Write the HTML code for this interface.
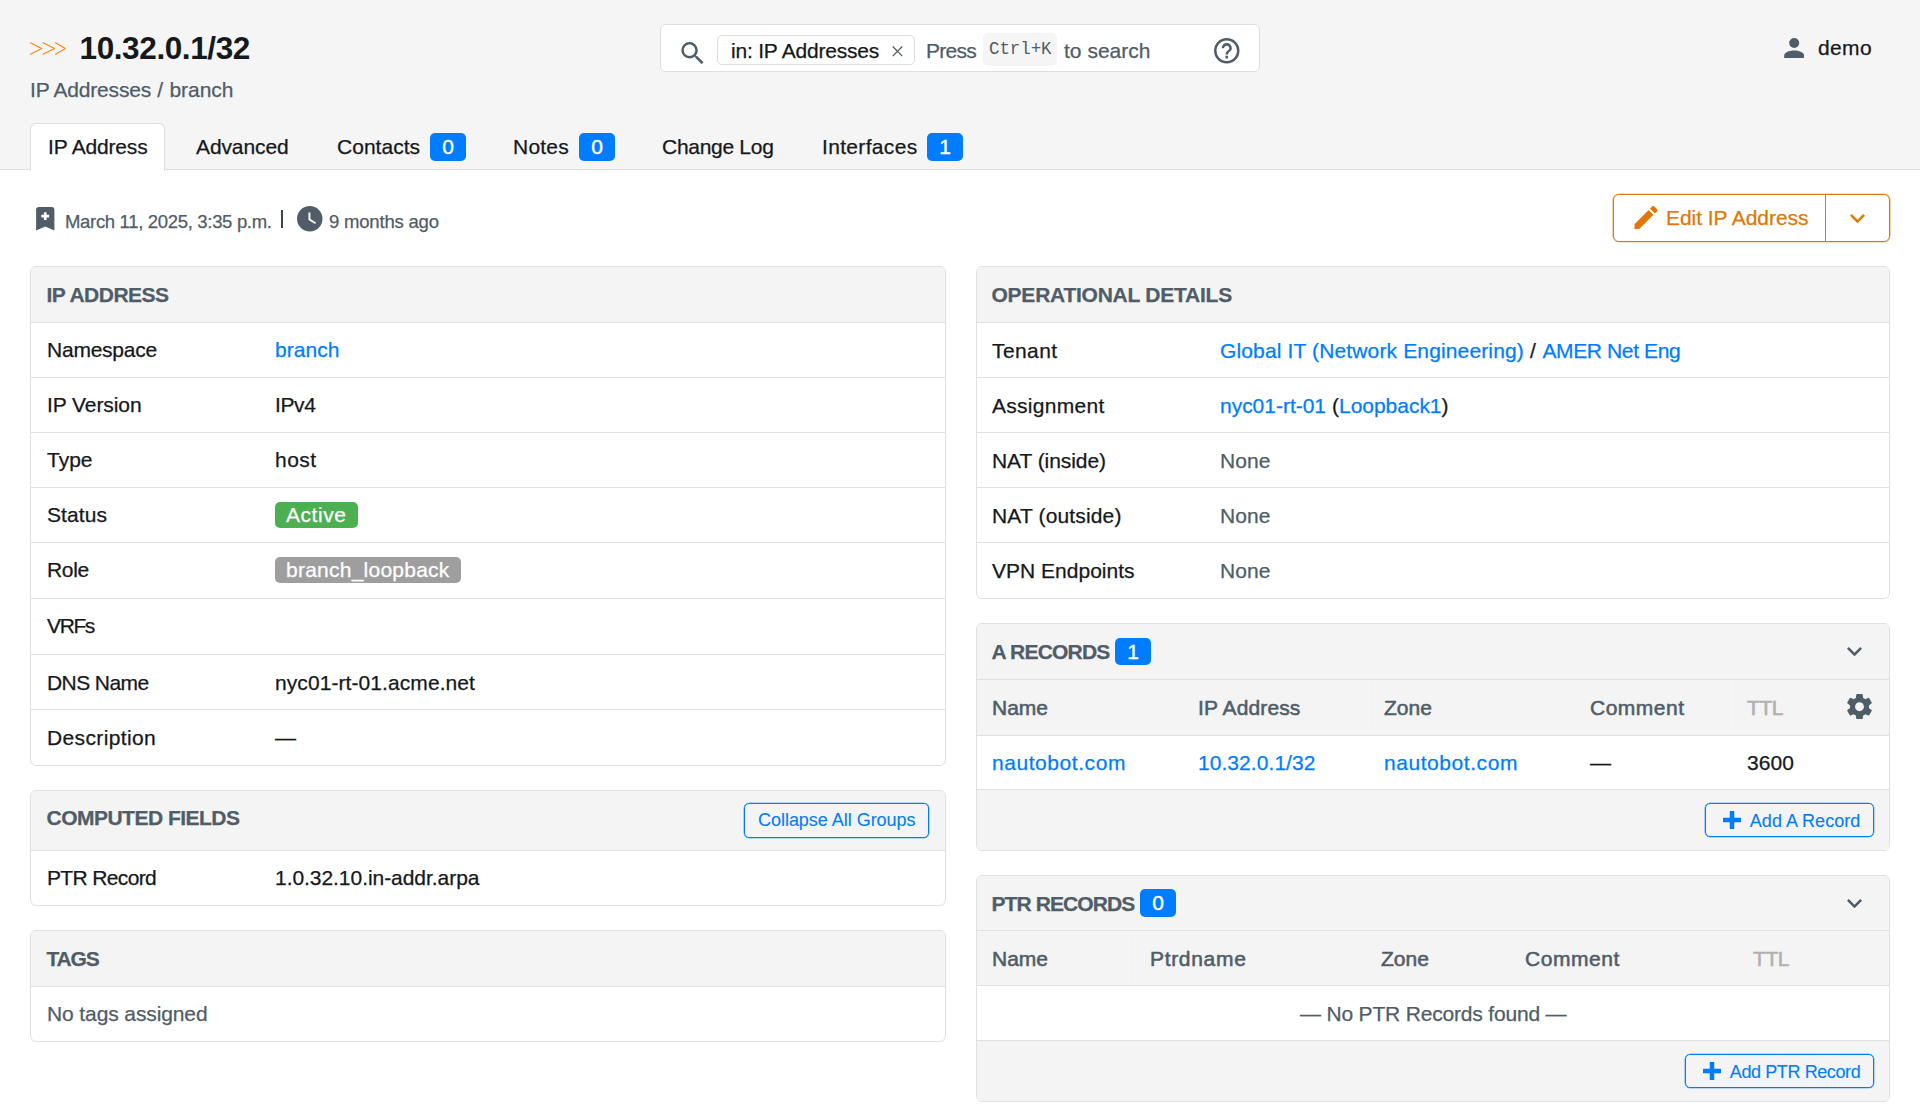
<!DOCTYPE html>
<html lang="en">
<head>
<meta charset="utf-8">
<title>10.32.0.1/32 - Nautobot</title>
<style>
*{box-sizing:border-box}
html,body{margin:0;padding:0}
body{width:1920px;height:1110px;overflow:hidden;background:#fff;position:relative;
 font-family:"Liberation Sans",sans-serif;font-size:21px;color:#15191c;line-height:1;-webkit-text-stroke:.25px}
a{color:#007dff;text-decoration:none}
.abs{position:absolute}
span{white-space:pre}
svg{display:block;position:absolute}
.gray{color:#505d68}
header{position:absolute;left:0;top:0;width:1920px;height:170px;background:#f5f5f5;border-bottom:1px solid #dedede}
h1{position:absolute;left:79.5px;top:32px;margin:0;font-size:31.5px;line-height:32px;-webkit-text-stroke:0;font-weight:700;color:#15191c}
.crumb{position:absolute;left:30px;top:78px;font-size:21px;line-height:24px;color:#505d68}
.crumb a{color:#505d68}
/* tabs */
.tabs{position:absolute;left:30px;top:123px;height:48px;margin:0;padding:0;list-style:none}
.tabs li{position:absolute;top:0;height:47px;line-height:48px;font-size:21px;color:#15191c}
.tabs li.active{background:#fff;border:1px solid #dedede;border-bottom:none;border-radius:6px 6px 0 0;height:48px;line-height:46px}
.badge{display:inline-block;background:#007dff;color:#fff;border-radius:5px;text-align:center;font-size:21px;-webkit-text-stroke:.4px}
.tabs .badge{position:absolute;top:10px;height:28px;line-height:28px;width:36px;margin-left:1px}
/* search */
.search{position:absolute;left:660px;top:24px;width:600px;height:48px;background:#fff;border:1px solid #dedede;border-radius:6px}
.chip{position:absolute;left:56px;top:10px;width:198px;height:30px;border:1px solid #dedede;border-radius:5px;background:#fff}
kbd{position:absolute;left:322px;top:8px;width:74px;height:33px;background:#f5f5f5;border-radius:5px;font-family:"Liberation Mono",monospace;font-size:17.5px;line-height:33px;color:#505d68;padding-left:6px;-webkit-text-stroke:0}
/* buttons */
.btn-edit{position:absolute;left:1613px;top:194px;width:277px;height:48px;border:1px solid #e07807;box-shadow:0 0 0 .35px #e07807;border-radius:6px;color:#e07807;font-size:21px}
.btn-edit i{position:absolute;left:211px;top:0;width:1.3px;height:46px;background:#e07807}
.btn{position:absolute;border:1px solid #007dff;box-shadow:0 0 0 .3px #007dff;border-radius:5px;color:#007dff;background:transparent;font-size:18px;-webkit-text-stroke:.1px}
/* panels */
.panel{position:absolute;border:1px solid #e0e0e0;border-radius:6px;background:#fff;overflow:hidden}
.ph{position:relative;height:55px;background:#f4f4f4;font-weight:700;color:#505d68;font-size:21px;line-height:56px;padding-left:15.5px}
.ph .badge{position:absolute;top:14px;height:27px;line-height:27px;width:36px;font-weight:400}
.row{position:relative;height:55px;border-top:1px solid #e0e0e0;line-height:54px}
.row .k{position:absolute;left:16px;top:0}
.row .v{position:absolute;left:244px;top:0}
.lbl{display:inline-block;height:26px;line-height:26px;border-radius:5px;color:#fff;padding:0 11px;vertical-align:middle;position:relative;top:-1px}
.th{position:relative;height:55px;border-top:1px solid #e0e0e0;background:#f4f4f4;line-height:55px;font-weight:400;color:#505d68;-webkit-text-stroke-width:.55px}
.th>span,.tr>span,.tr>a{position:absolute;top:0}
.tr{position:relative;height:55px;border-top:1px solid #e0e0e0;line-height:55px;background:#fff}
.rp>div{margin-left:-1px}
.rp .row{line-height:55px}
.th i{position:absolute;top:0;width:1px;height:100%;background:rgba(255,255,255,.22)}
.pf{position:relative;height:62px;border-top:1px solid #e0e0e0;background:#f4f4f4}
</style>
</head>
<body>
<header>
  <svg style="left:29px;top:41px" width="38" height="15" viewBox="0 0 38 15" fill="none" stroke="#ff8504" stroke-width="1.05" stroke-linecap="round" stroke-linejoin="round"><path d="M1.4 1.7 12.7 7.45 1.4 13.2M14.1 1.7 25.5 7.45 14.1 13.2M26.5 1.7 36.4 7.45 26.5 13.2"/></svg>
  <h1><span style="letter-spacing:-0.39px">10.32.0.1/32</span></h1>
  <div class="crumb"><a><span style="letter-spacing:-0.20px">IP Addresses</span></a><span style="letter-spacing:0.33px"> / </span><a><span style="letter-spacing:-0.04px">branch</span></a></div>

  <div class="search">
    <svg style="left:20px;top:17.2px" width="22.8" height="22.2" viewBox="3 3 17.5 17.5" fill="#505d68"><path d="M9.5,3A6.5,6.5 0 0,1 16,9.5C16,11.11 15.41,12.59 14.44,13.73L14.71,14H15.5L20.5,19L19,20.5L14,15.5V14.71L13.73,14.44C12.59,15.41 11.11,16 9.5,16A6.5,6.5 0 0,1 3,9.5A6.5,6.5 0 0,1 9.5,3M9.5,5C7,5 5,7 5,9.5C5,12 7,14 9.5,14C12,14 14,12 14,9.5C14,7 12,5 9.5,5Z"/></svg>
    <div class="chip">
      <span class="abs" style="left:13px;top:0;line-height:30px;font-size:21px"><span style="letter-spacing:-0.21px">in: IP Addresses</span></span>
      <svg style="left:173.6px;top:10px" width="11" height="10.7" viewBox="0 0 11 11" fill="none" stroke="#505d68" stroke-width="1.35"><path d="M.6 .6 10.4 10.4M10.4 .6 .6 10.4"/></svg>
    </div>
    <span class="abs gray" style="left:265px;top:0;line-height:52px"><span style="letter-spacing:-0.74px">Press</span></span>
    <kbd><span style="letter-spacing:-0.09px">Ctrl+K</span></kbd>
    <span class="abs gray" style="left:403px;top:0;line-height:52px"><span style="letter-spacing:0.01px">to search</span></span>
    <svg style="left:553px;top:13px" width="25.5" height="25.5" viewBox="2 2 20 20" fill="#505d68"><path d="M11,18H13V16H11V18M12,2A10,10 0 0,0 2,12A10,10 0 0,0 12,22A10,10 0 0,0 22,12A10,10 0 0,0 12,2M12,20C7.59,20 4,16.41 4,12C4,7.59 7.59,4 12,4C16.41,4 20,7.59 20,12C20,16.41 16.41,20 12,20M12,6A4,4 0 0,0 8,10H10A2,2 0 0,1 12,8A2,2 0 0,1 14,10C14,12 11,11.75 11,15H13C13,12.75 16,12.5 16,10A4,4 0 0,0 12,6Z"/></svg>
  </div>

  <svg style="left:1783.7px;top:38px" width="20.4" height="20" viewBox="4 4 16 16" fill="#505d68"><path d="M12,4A4,4 0 0,1 16,8A4,4 0 0,1 12,12A4,4 0 0,1 8,8A4,4 0 0,1 12,4M12,14C16.42,14 20,15.79 20,18V20H4V18C4,15.79 7.58,14 12,14Z"/></svg>
  <span class="abs" style="left:1818px;top:35px;line-height:26px"><span style="letter-spacing:0.37px">demo</span></span>

  <ul class="tabs">
    <li class="active" style="left:0;width:135px;padding-left:17px"><span style="letter-spacing:-0.17px">IP Address</span></li>
    <li style="left:166px"><span style="letter-spacing:-0.11px">Advanced</span></li>
    <li style="left:307px"><span style="letter-spacing:0.02px">Contacts</span><span class="badge" style="left:92px">0</span></li>
    <li style="left:483px"><span style="letter-spacing:0.23px">Notes</span><span class="badge" style="left:65px">0</span></li>
    <li style="left:632px"><span style="letter-spacing:-0.29px">Change Log</span></li>
    <li style="left:792px"><span style="letter-spacing:0.33px">Interfaces</span><span class="badge" style="left:104px">1</span></li>
  </ul>
</header>

<!-- created / updated -->
<svg style="left:36px;top:207px" width="18.5" height="23.5" viewBox="5 3 14 18" fill="#505d68"><path d="M17,3A2,2 0 0,1 19,5V21L12,18L5,21V5C5,3.89 5.9,3 7,3H17M11,7V9H9V11H11V13H13V11H15V9H13V7H11Z"/></svg>
<span class="abs gray" style="left:65px;top:210px;font-size:18.5px;line-height:24px"><span style="letter-spacing:-0.32px">March 11, 2025, 3:35 p.m.</span></span>
<span class="abs" style="left:281px;top:210px;width:2px;height:18px;background:#3a444d"></span>
<svg style="left:297px;top:206px" width="25.5" height="25.5" viewBox="2 2 20 20" fill="#505d68"><path d="M12,2A10,10 0 0,0 2,12A10,10 0 0,0 12,22A10,10 0 0,0 22,12A10,10 0 0,0 12,2M16.2,16.2L11,13V7H12.5V12.2L17,14.9L16.2,16.2Z"/></svg>
<span class="abs gray" style="left:329px;top:210px;font-size:18.5px;line-height:24px"><span style="letter-spacing:-0.19px">9 months ago</span></span>

<div class="btn-edit">
  <svg style="left:20px;top:11px" width="24" height="23" viewBox="3 3 18 18" fill="#e07807"><path d="M20.71,7.04C21.1,6.65 21.1,6 20.71,5.63L18.37,3.29C18,2.9 17.35,2.9 16.96,3.29L15.12,5.12L18.87,8.87M3,17.25V21H6.75L17.81,9.93L14.06,6.18L3,17.25Z"/></svg>
  <span class="abs" style="left:52px;top:0;line-height:46px"><span style="letter-spacing:-0.05px">Edit IP Address</span></span>
  <i></i>
  <svg style="left:236px;top:18.5px" width="15" height="9.3" viewBox="6 8.58 12 7.42" fill="#e07807"><path d="M7.41,8.58L12,13.17L16.59,8.58L18,10L12,16L6,10L7.41,8.58Z"/></svg>
</div>

<!-- IP ADDRESS panel -->
<div class="panel" style="left:30px;top:266px;width:916px;height:500px">
  <div class="ph"><span style="letter-spacing:-0.52px">IP ADDRESS</span></div>
  <div class="row"><span class="k"><span style="letter-spacing:-0.23px">Namespace</span></span><span class="v"><a><span style="letter-spacing:0.05px">branch</span></a></span></div>
  <div class="row"><span class="k"><span style="letter-spacing:-0.08px">IP Version</span></span><span class="v"><span style="letter-spacing:-0.38px">IPv4</span></span></div>
  <div class="row"><span class="k"><span style="letter-spacing:-0.01px">Type</span></span><span class="v"><span style="letter-spacing:0.45px">host</span></span></div>
  <div class="row"><span class="k"><span style="letter-spacing:0.08px">Status</span></span><span class="v"><span class="lbl" style="background:#4caf50"><span style="letter-spacing:0.55px">Active</span></span></span></div>
  <div class="row" style="height:56px"><span class="k"><span style="letter-spacing:-0.30px">Role</span></span><span class="v"><span class="lbl" style="background:#9e9e9e"><span style="letter-spacing:0.24px">branch_loopback</span></span></span></div>
  <div class="row" style="height:56px"><span class="k"><span style="letter-spacing:-1.38px">VRFs</span></span></div>
  <div class="row" style="line-height:55px"><span class="k"><span style="letter-spacing:-0.59px">DNS Name</span></span><span class="v"><span style="letter-spacing:0.08px">nyc01-rt-01.acme.net</span></span></div>
  <div class="row" style="height:56px;line-height:55px"><span class="k"><span style="letter-spacing:0.36px">Description</span></span><span class="v"><span style="letter-spacing:0.00px">&mdash;</span></span></div>
</div>

<!-- COMPUTED FIELDS -->
<div class="panel" style="left:30px;top:790px;width:916px;height:116px">
  <div class="ph" style="height:59px;line-height:53.5px"><span style="letter-spacing:-0.51px">COMPUTED FIELDS</span>
    <span class="btn" style="left:713px;top:12px;width:185px;height:35px;font-weight:400"><span class="abs" style="left:13px;top:0;line-height:32px"><span style="letter-spacing:-0.03px">Collapse All Groups</span></span></span>
  </div>
  <div class="row"><span class="k"><span style="letter-spacing:-0.65px">PTR Record</span></span><span class="v"><span style="letter-spacing:-0.05px">1.0.32.10.in-addr.arpa</span></span></div>
</div>

<!-- TAGS -->
<div class="panel" style="left:30px;top:930px;width:916px;height:112px">
  <div class="ph" style="line-height:55.5px"><span style="letter-spacing:-1.20px">TAGS</span></div>
  <div class="row" style="line-height:53px"><span class="k gray"><span style="letter-spacing:-0.11px">No tags assigned</span></span></div>
</div>

<!-- OPERATIONAL DETAILS -->
<div class="panel rp" style="left:976px;top:266px;width:914px;height:333px">
  <div class="ph"><span style="letter-spacing:-0.24px">OPERATIONAL DETAILS</span></div>
  <div class="row"><span class="k"><span style="letter-spacing:0.41px">Tenant</span></span><span class="v"><a><span style="letter-spacing:0.14px">Global IT (Network Engineering)</span></a><span style="letter-spacing:0.33px"> / </span><a><span style="letter-spacing:-0.37px">AMER Net Eng</span></a></span></div>
  <div class="row"><span class="k"><span style="letter-spacing:0.28px">Assignment</span></span><span class="v"><a><span style="letter-spacing:-0.02px">nyc01-rt-01</span></a><span style="letter-spacing:0.09px"> (</span><a><span style="letter-spacing:-0.03px">Loopback1</span></a><span style="letter-spacing:0.00px">)</span></span></div>
  <div class="row"><span class="k"><span style="letter-spacing:-0.06px">NAT (inside)</span></span><span class="v gray"><span style="letter-spacing:0.07px">None</span></span></div>
  <div class="row"><span class="k"><span style="letter-spacing:0.15px">NAT (outside)</span></span><span class="v gray"><span style="letter-spacing:0.07px">None</span></span></div>
  <div class="row" style="height:56px"><span class="k"><span style="letter-spacing:0.01px">VPN Endpoints</span></span><span class="v gray"><span style="letter-spacing:0.07px">None</span></span></div>
</div>

<!-- A RECORDS -->
<div class="panel rp" style="left:976px;top:623px;width:914px;height:228px">
  <div class="ph"><span style="letter-spacing:-0.80px">A RECORDS</span><span class="badge" style="left:139px">1</span>
    <svg style="left:871px;top:22.5px" width="15" height="9.3" viewBox="6 8.58 12 7.42" fill="#505d68"><path d="M7.41,8.58L12,13.17L16.59,8.58L18,10L12,16L6,10L7.41,8.58Z"/></svg>
  </div>
  <div class="th" style="height:56px;line-height:56px"><i style="left:206px"></i><i style="left:392px"></i><i style="left:598px"></i><i style="left:755px"></i><i style="left:853px"></i><span style="left:16px"><span style="letter-spacing:-0.01px">Name</span></span><span style="left:222px"><span style="letter-spacing:0.13px">IP Address</span></span><span style="left:408px"><span style="letter-spacing:0.03px">Zone</span></span><span style="left:614px"><span style="letter-spacing:0.50px">Comment</span></span><span style="left:771px;color:#b0b0b0"><span style="letter-spacing:-0.45px">TTL</span></span>
    <svg style="left:870.5px;top:14px" width="25" height="25.4" viewBox="2.27 2 19.46 20" fill="#505d68"><path d="M12,15.5A3.5,3.5 0 0,1 8.5,12A3.5,3.5 0 0,1 12,8.5A3.5,3.5 0 0,1 15.5,12A3.5,3.5 0 0,1 12,15.5M19.43,12.97C19.47,12.65 19.5,12.33 19.5,12C19.5,11.67 19.47,11.34 19.43,11L21.54,9.37C21.73,9.22 21.78,8.95 21.66,8.73L19.66,5.27C19.54,5.05 19.27,4.96 19.05,5.05L16.56,6.05C16.04,5.66 15.5,5.32 14.87,5.07L14.5,2.42C14.46,2.18 14.25,2 14,2H10C9.75,2 9.54,2.18 9.5,2.42L9.13,5.07C8.5,5.32 7.96,5.66 7.44,6.05L4.95,5.05C4.73,4.96 4.46,5.05 4.34,5.27L2.34,8.73C2.21,8.95 2.27,9.22 2.46,9.37L4.57,11C4.53,11.34 4.5,11.67 4.5,12C4.5,12.33 4.53,12.65 4.57,12.97L2.46,14.63C2.27,14.78 2.21,15.05 2.34,15.27L4.34,18.73C4.46,18.95 4.73,19.03 4.95,18.95L7.44,17.94C7.96,18.34 8.5,18.68 9.13,18.93L9.5,21.58C9.54,21.82 9.75,22 10,22H14C14.25,22 14.46,21.82 14.5,21.58L14.87,18.93C15.5,18.67 16.04,18.34 16.56,17.94L19.05,18.95C19.27,19.03 19.54,18.95 19.66,18.73L21.66,15.27C21.78,15.05 21.73,14.78 21.54,14.63L19.43,12.97Z"/></svg>
  </div>
  <div class="tr" style="height:54px;line-height:54px"><a style="left:16px"><span style="letter-spacing:0.56px">nautobot.com</span></a><a style="left:222px"><span style="letter-spacing:0.06px">10.32.0.1/32</span></a><a style="left:408px"><span style="letter-spacing:0.56px">nautobot.com</span></a><span style="left:614px"><span style="letter-spacing:0.00px">&mdash;</span></span><span style="left:771px"><span style="letter-spacing:0.07px">3600</span></span></div>
  <div class="pf">
    <span class="btn" style="left:729.3px;top:13px;width:168.5px;height:34px">
      <svg style="left:16.5px;top:7.4px" width="18" height="18" viewBox="4 4 16 16" fill="#007dff"><path d="M20 14H14V20H10V14H4V10H10V4H14V10H20V14Z"/></svg>
      <span class="abs" style="left:43.5px;top:0;line-height:34px"><span style="letter-spacing:0.04px">Add A Record</span></span></span>
  </div>
</div>

<!-- PTR RECORDS -->
<div class="panel rp" style="left:976px;top:875px;width:914px;height:227px">
  <div class="ph" style="height:54px;line-height:55px"><span style="letter-spacing:-0.90px">PTR RECORDS</span><span class="badge" style="left:164px;top:13px;height:28px;line-height:28px">0</span>
    <svg style="left:871px;top:22.5px" width="15" height="9.3" viewBox="6 8.58 12 7.42" fill="#505d68"><path d="M7.41,8.58L12,13.17L16.59,8.58L18,10L12,16L6,10L7.41,8.58Z"/></svg>
  </div>
  <div class="th"><i style="left:159px"></i><i style="left:389px"></i><i style="left:533px"></i><i style="left:762px"></i><i style="left:882px"></i><span style="left:16px"><span style="letter-spacing:-0.01px">Name</span></span><span style="left:174px"><span style="letter-spacing:0.68px">Ptrdname</span></span><span style="left:405px"><span style="letter-spacing:0.03px">Zone</span></span><span style="left:549px"><span style="letter-spacing:0.57px">Comment</span></span><span style="left:777px;color:#b0b0b0"><span style="letter-spacing:-0.45px">TTL</span></span></div>
  <div class="tr"><span class="gray" style="left:324px"><span style="letter-spacing:-0.18px">&mdash; No PTR Records found &mdash;</span></span></div>
  <div class="pf">
    <span class="btn" style="left:709.3px;top:13px;width:188.5px;height:34px">
      <svg style="left:16.5px;top:7.4px" width="18" height="18" viewBox="4 4 16 16" fill="#007dff"><path d="M20 14H14V20H10V14H4V10H10V4H14V10H20V14Z"/></svg>
      <span class="abs" style="left:43.5px;top:0;line-height:34px"><span style="letter-spacing:-0.40px">Add PTR Record</span></span></span>
  </div>
</div>
</body>
</html>
